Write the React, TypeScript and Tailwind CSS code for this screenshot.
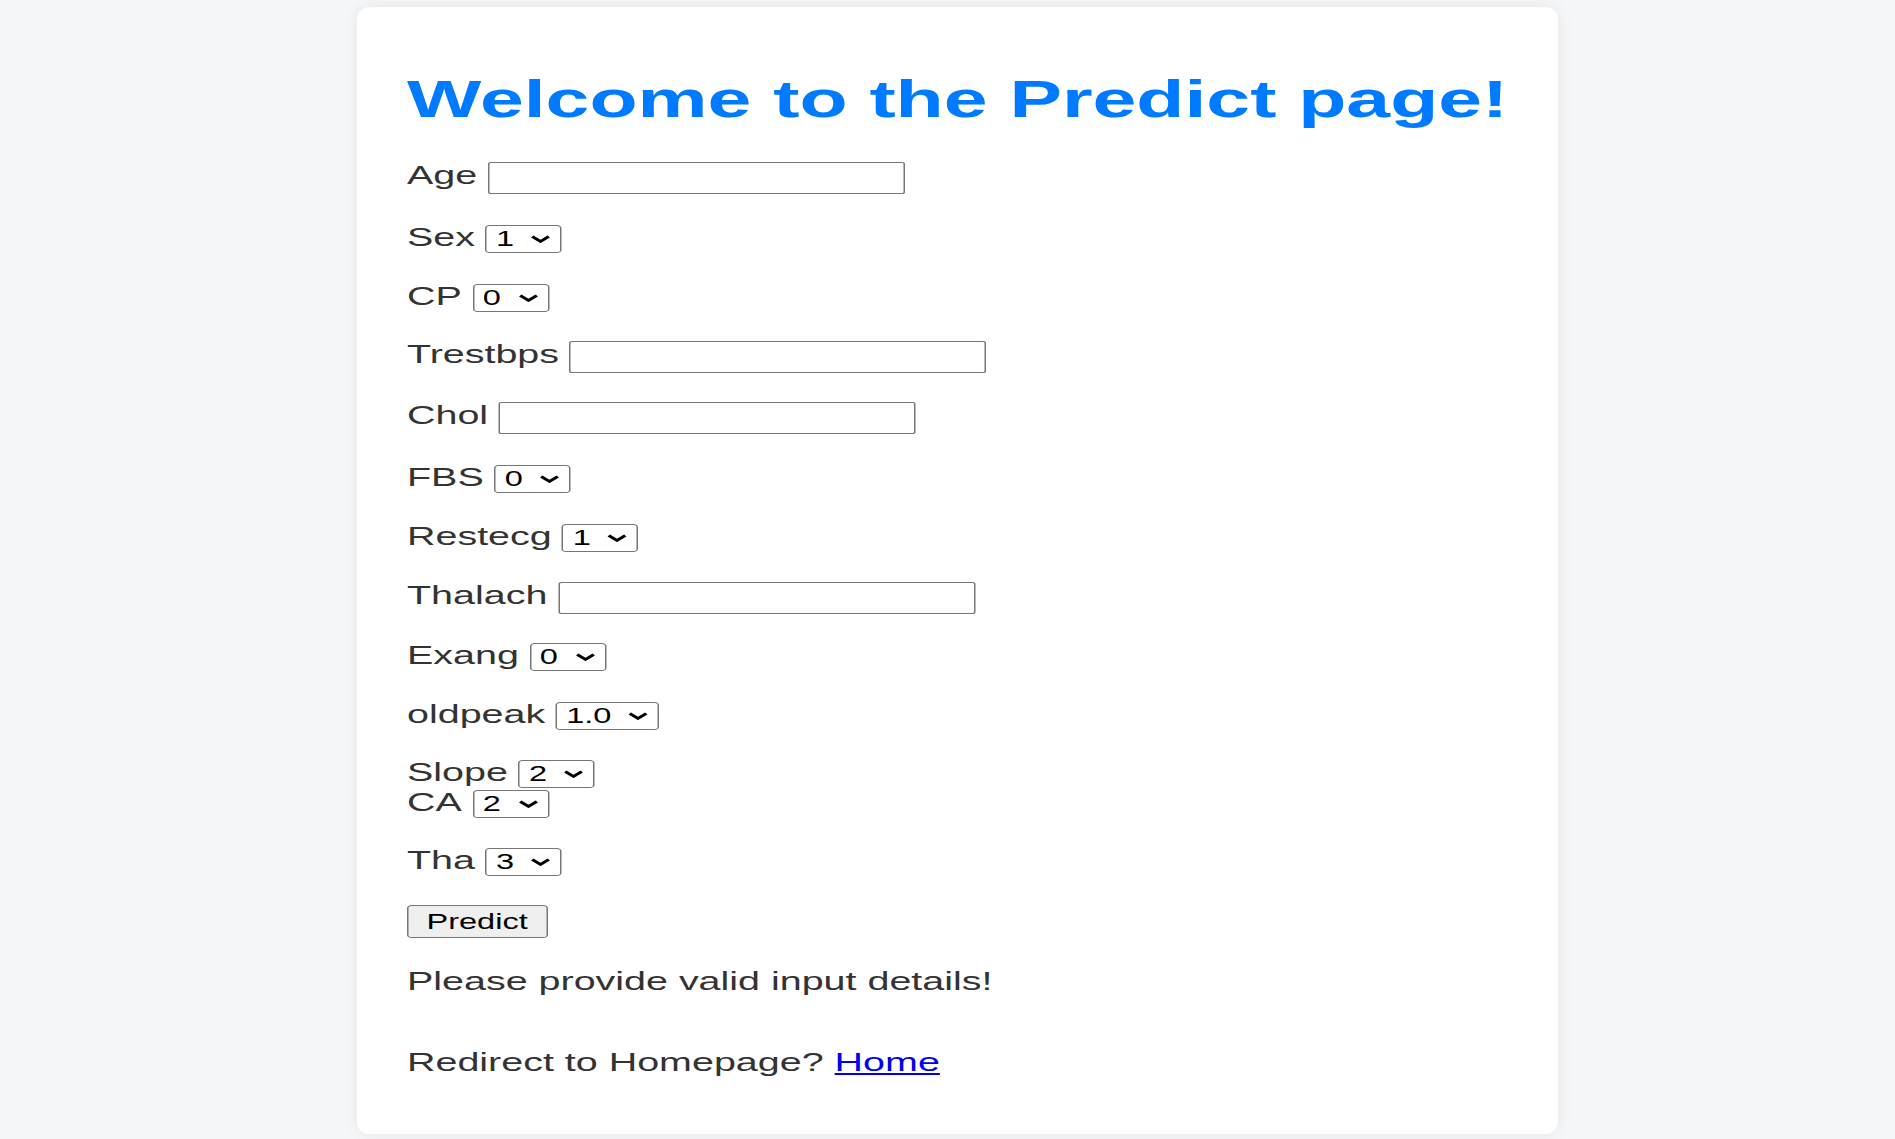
type Field = {
  label: string
  mt: string
  options?: string[]
  value?: string
}

// spacing taken from the screenshot, row by row
const fields: Field[] = [
  { label: 'Age', mt: 'mt-[31px]' },
  { label: 'Sex', mt: 'mt-[32px]', options: ['0', '1'], value: '1' },
  { label: 'CP', mt: 'mt-[29px]', options: ['0', '1', '2', '3'], value: '0' },
  { label: 'Trestbps', mt: 'mt-[28px]' },
  { label: 'Chol', mt: 'mt-[31px]' },
  { label: 'FBS', mt: 'mt-[32px]', options: ['0', '1'], value: '0' },
  { label: 'Restecg', mt: 'mt-[29px]', options: ['0', '1', '2'], value: '1' },
  { label: 'Thalach', mt: 'mt-[29px]' },
  { label: 'Exang', mt: 'mt-[30px]', options: ['0', '1'], value: '0' },
  {
    label: 'oldpeak',
    mt: 'mt-[29px]',
    options: ['0.0', '1.0', '2.0', '3.0', '4.0', '5.0', '6.0'],
    value: '1.0',
  },
  { label: 'Slope', mt: 'mt-[28px]', options: ['0', '1', '2'], value: '2' },
  { label: 'CA', mt: 'mt-0', options: ['0', '1', '2', '3', '4'], value: '2' },
  { label: 'Tha', mt: 'mt-[28px]', options: ['0', '1', '2', '3'], value: '3' },
]

function Dropdown({ options, value }: { options: string[]; value?: string }) {
  return (
    <span className="relative mt-[3px] inline-flex h-[28px]">
      <select
        defaultValue={value}
        className="h-[28px] appearance-none rounded-[3px] border border-[#767676] bg-white pl-[6px] pr-[30px] text-[21.7px] leading-none text-black outline-none"
      >
        {options.map((o) => (
          <option key={o} value={o}>
            {o}
          </option>
        ))}
      </select>
      <svg
        className="pointer-events-none absolute right-[7px] top-[10px] h-[8px] w-[14px]"
        viewBox="0 0 14 8"
        fill="none"
      >
        <path d="M1.5 1.5L7 6.5L12.5 1.5" stroke="#000" strokeWidth="2.4" />
      </svg>
    </span>
  )
}

function TextInput() {
  return (
    <input
      type="text"
      className="mt-[2px] h-[32px] w-[278px] rounded-[2px] border border-[#767676] bg-white px-[3px] text-[21.7px] text-black outline-none"
    />
  )
}

export default function App() {
  return (
    <div className="h-screen overflow-hidden bg-[#f6f7f9] pt-[7px] font-['Liberation_Sans',Arial,sans-serif] text-[#333]">
      <div className="ml-[357px] w-[1201px] rounded-[12px] bg-white pb-[57px] pl-[50px] pt-[62px] shadow-[0_0_18px_rgba(0,0,0,0.08)]">
        {/* the screenshot is stretched sideways, so the content is too */}
        <div className="w-[760px] origin-left scale-x-150 text-[26.3px] leading-[30px]">
          <h1 className="whitespace-nowrap text-[52.5px] font-bold leading-[60px] text-[#007bff]">
            Welcome to the Predict page!
          </h1>
          <form onSubmit={(e) => e.preventDefault()}>
            {fields.map((f) => (
              <div key={f.label} className={`flex h-[30px] items-start gap-[7px] ${f.mt}`}>
                <label className="leading-[30px]">{f.label}</label>
                {f.options ? <Dropdown options={f.options} value={f.value} /> : <TextInput />}
              </div>
            ))}
            <button
              type="submit"
              className="mt-[30px] block h-[33px] rounded-[3px] border border-[#767676] bg-[#efefef] px-[12px] text-[21.7px] leading-none text-black"
            >
              Predict
            </button>
          </form>
          <p className="mt-[28px]">Please provide valid input details!</p>
          <p className="mt-[51px]">
            Redirect to Homepage?{' '}
            <a href="#" className="text-[#0000ee] underline">
              Home
            </a>
          </p>
        </div>
      </div>
    </div>
  )
}
